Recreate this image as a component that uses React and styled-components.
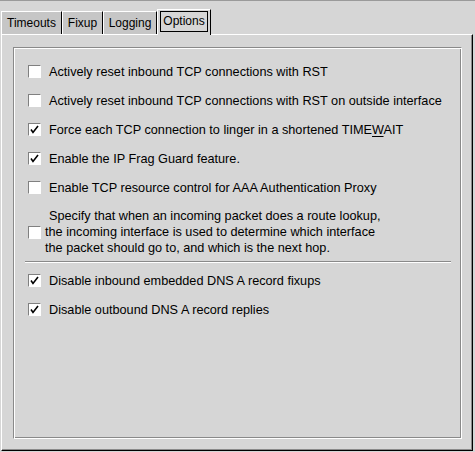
import React, { useState } from "react";
import styled, { createGlobalStyle } from "styled-components";

const GlobalStyle = createGlobalStyle`
  html, body {
    margin: 0;
    padding: 0;
    background: #d6d6d6;
  }
  body {
    font-family: "Liberation Sans", Arial, sans-serif;
    font-size: 12px;
    color: #000;
  }
`;

const tabs = [
  { name: "Timeouts", width: 61 },
  { name: "Fixup", width: 41 },
  { name: "Logging", width: 54 },
  { name: "Options", width: 54 },
];

// options list; multi = several lines of label text
const options = [
  { label: "Actively reset inbound TCP connections with RST", checked: false },
  {
    label: "Actively reset inbound TCP connections with RST on outside interface",
    checked: false,
  },
  {
    label: (
      <>
        Force each TCP connection to linger in a shortened TIME<u>W</u>AIT
      </>
    ),
    checked: true,
  },
  { label: "Enable the IP Frag Guard feature.", checked: true },
  { label: "Enable TCP resource control for AAA Authentication Proxy", checked: false },
];

const dnsOptions = [
  { label: "Disable inbound embedded DNS A record fixups", checked: true },
  { label: "Disable outbound DNS A record replies", checked: true },
];

function CheckBox({ checked, onToggle }) {
  return (
    <Box onClick={onToggle}>
      {checked && (
        <svg width="11" height="11" viewBox="0 0 11 11">
          <path d="M2 5.5 L4 8.5 L9 2" fill="none" stroke="#000" strokeWidth="1.6" />
        </svg>
      )}
    </Box>
  );
}

function App() {
  const [active, setActive] = useState("Options");
  const [checks, setChecks] = useState(() =>
    [...options, { checked: false }, ...dnsOptions].map((o) => o.checked)
  );

  const toggle = (idx) => {
    setChecks((prev) => prev.map((v, i) => (i === idx ? !v : v)));
  };

  return (
    <>
      <GlobalStyle />
      <Window>
        <TabBar>
          {tabs.map((tab) => {
            const selected = tab.name === active;
            return (
              <Tab
                key={tab.name}
                $width={tab.width}
                $selected={selected}
                onClick={() => setActive(tab.name)}
              >
                {selected ? <Focus>{tab.name}</Focus> : tab.name}
              </Tab>
            );
          })}
        </TabBar>
        <Panel>
          <Group>
            {options.map((opt, idx) => (
              <Row key={idx}>
                <CheckBox checked={checks[idx]} onToggle={() => toggle(idx)} />
                <Label>{opt.label}</Label>
              </Row>
            ))}
            <MultiRow>
              <CheckBox checked={checks[5]} onToggle={() => toggle(5)} />
              <MultiLabel>
                <FirstLine>Specify that when an incoming packet does a route lookup,</FirstLine>
                <div>the incoming interface is used to determine which interface</div>
                <div>the packet should go to, and which is the next hop.</div>
              </MultiLabel>
            </MultiRow>
            <Separator />
            <DnsRows>
              {dnsOptions.map((opt, idx) => (
                <Row key={idx}>
                  <CheckBox checked={checks[6 + idx]} onToggle={() => toggle(6 + idx)} />
                  <Label>{opt.label}</Label>
                </Row>
              ))}
            </DnsRows>
          </Group>
        </Panel>
      </Window>
    </>
  );
}

const Window = styled.div`
  width: 475px;
  height: 452px;
  box-sizing: border-box;
  border-top: 1px solid #9a9a9a;
  padding: 8px 2px 0 1px;
  display: flex;
  flex-direction: column;
`;

const TabBar = styled.div`
  display: flex;
  align-items: flex-end;
  height: 25px;
`;

const Tab = styled.div`
  position: relative;
  z-index: 1;
  box-sizing: border-box;
  width: ${(p) => p.$width}px;
  height: ${(p) => (p.$selected ? "26px" : "23px")};
  margin-bottom: ${(p) => (p.$selected ? "-1px" : "0")};
  display: flex;
  align-items: center;
  justify-content: center;
  padding-bottom: ${(p) => (p.$selected ? "3px" : "1px")};
  background: ${(p) => (p.$selected ? "#d6d6d6" : "#c6c6c6")};
  border-left: 1px solid #fff;
  border-top: 1px solid #fff;
  border-right: 1px solid #000;
  cursor: default;
`;

const Focus = styled.span`
  border: 1px solid #000;
  padding: 2px 2px 3px 2px;
  line-height: 14px;
`;

const Panel = styled.div`
  height: 417px;
  box-sizing: border-box;
  border: 1px solid;
  border-color: #fff #000 #000 #fff;
  box-shadow: inset -1px -1px 0 #8a8a8a;
  padding: 12px 10px 11px 11px;
  display: flex;
`;

const Group = styled.div`
  flex: 1;
  box-sizing: border-box;
  border: 1px solid;
  border-color: #8a8a8a #fff #fff #8a8a8a;
  box-shadow: inset 1px 1px 0 #fff, inset -1px -1px 0 #8a8a8a;
  padding: 9px 10px 0 14px;
  display: flex;
  flex-direction: column;
`;

const Row = styled.div`
  height: 29px;
  display: flex;
  align-items: center;
`;

const Box = styled.div`
  width: 13px;
  height: 13px;
  box-sizing: border-box;
  flex-shrink: 0;
  border: 1px solid;
  border-color: #808080 #fff #fff #808080;
  background: #fff;
  display: flex;
  align-items: center;
  justify-content: center;
  cursor: pointer;
`;

const Label = styled.span`
  margin-left: 8px;
  font-size: 12.7px;
  line-height: 16px;
  white-space: nowrap;

  u {
    text-underline-offset: 2px;
  }
`;

const MultiRow = styled.div`
  margin-top: 6px;
  display: flex;
  align-items: center;
`;

const MultiLabel = styled.div`
  margin-left: 4px;
  font-size: 12.7px;
  line-height: 16px;
  white-space: nowrap;
`;

const FirstLine = styled.div`
  text-indent: 4px;
`;

const Separator = styled.div`
  margin: 5px 0 0 -3px;
  border-top: 1px solid #8a8a8a;
  border-bottom: 1px solid #fff;
`;

const DnsRows = styled.div`
  margin-top: 3px;
  display: flex;
  flex-direction: column;
`;

export default App;
